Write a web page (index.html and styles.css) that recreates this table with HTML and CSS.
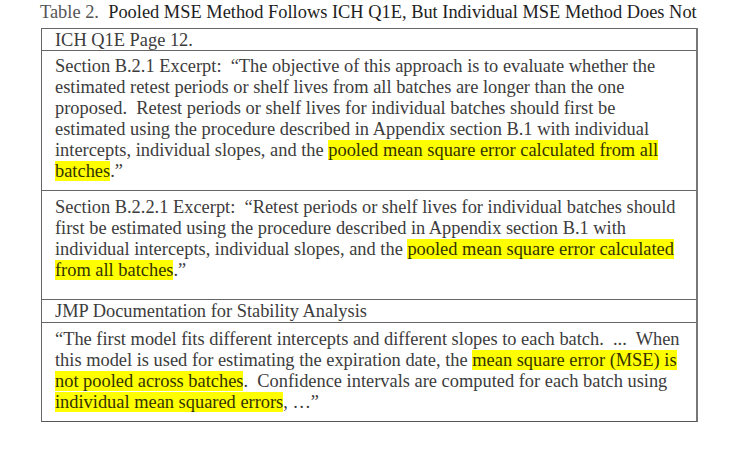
FILE: index.html
```html
<!DOCTYPE html>
<html>
<head>
<meta charset="utf-8">
<link rel="stylesheet" href="styles.css">
</head>
<body>
<div class="page">
  <div class="caption"><span class="cap-label">Table 2.</span>&nbsp; Pooled MSE Method Follows ICH Q1E, But Individual MSE Method Does Not</div>
  <div class="tbl">
    <div class="row r-head1">ICH Q1E Page 12.</div>
    <div class="row r-body1">Section B.2.1 Excerpt:&nbsp; “The objective of this approach is to evaluate whether the<br>estimated retest periods or shelf lives from all batches are longer than the one<br>proposed.&nbsp; Retest periods or shelf lives for individual batches should first be<br>estimated using the procedure described in Appendix section B.1 with individual<br>intercepts, individual slopes, and the <span class="hl">pooled mean square error calculated from all<br>batches</span>.”</div>
    <div class="row r-body2">Section B.2.2.1 Excerpt:&nbsp; “Retest periods or shelf lives for individual batches should<br>first be estimated using the procedure described in Appendix section B.1 with<br>individual intercepts, individual slopes, and the <span class="hl">pooled mean square error calculated<br>from all batches</span>.”</div>
    <div class="row r-head2">JMP Documentation for Stability Analysis</div>
    <div class="row r-body3">“The first model fits different intercepts and different slopes to each batch.&nbsp; ...&nbsp; When<br>this model is used for estimating the expiration date, the <span class="hl">mean square error (MSE) is<br>not pooled across batches</span>.&nbsp; Confidence intervals are computed for each batch using<br><span class="hl">individual mean squared errors</span>, …”</div>
  </div>
</div>
</body>
</html>
```
FILE: styles.css
```css
html, body {
  margin: 0;
  padding: 0;
  background: #ffffff;
}
.page {
  width: 736px;
  height: 458px;
  padding-top: 1px;
  box-sizing: border-box;
  font-family: "Liberation Serif", "Times New Roman", serif;
  font-size: 18.4px;
  color: #3c3c3c;
}
.caption {
  margin-left: 40px;
  height: 22px;
  line-height: 22px;
  color: #1e1e1e;
  white-space: nowrap;
}
.cap-label {
  color: #555555;
}
.tbl {
  margin-top: 5px;
  margin-left: 41px;
  width: 657px;
  box-sizing: border-box;
  border-left: 1px solid #666666;
  border-right: 2px solid #777777;
  border-bottom: 1px solid #555555;
  display: flex;
  flex-direction: column;
}
.row {
  box-sizing: border-box;
  border-top: 1px solid #666666;
  padding-left: 13px;
  line-height: 21px;
  white-space: nowrap;
}
.r-head1 {
  height: 22px;
  padding-top: 1px;
}
.r-body1 {
  height: 140px;
  padding-top: 5px;
}
.r-body2 {
  height: 109px;
  padding-top: 6px;
}
.r-head2 {
  height: 23px;
  padding-top: 1px;
}
.r-body3 {
  height: 99px;
  padding-top: 6px;
}
.hl {
  background: #ffff00;
  color: #333300;
}
```
